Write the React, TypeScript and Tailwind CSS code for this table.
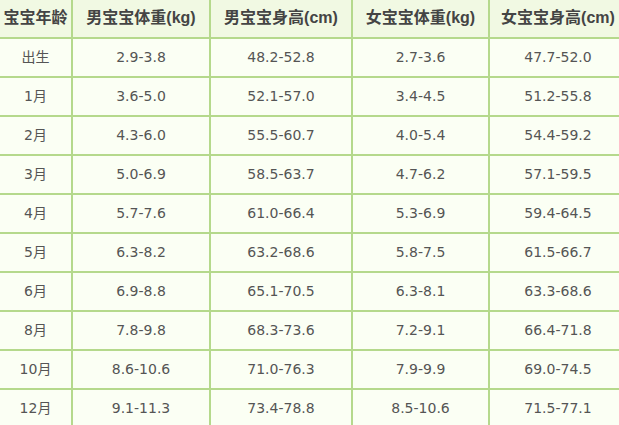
const headers = ["宝宝年龄", "男宝宝体重(kg)", "男宝宝身高(cm)", "女宝宝体重(kg)", "女宝宝身高(cm)"];

const rows: string[][] = [
  ["出生", "2.9-3.8", "48.2-52.8", "2.7-3.6", "47.7-52.0"],
  ["1月", "3.6-5.0", "52.1-57.0", "3.4-4.5", "51.2-55.8"],
  ["2月", "4.3-6.0", "55.5-60.7", "4.0-5.4", "54.4-59.2"],
  ["3月", "5.0-6.9", "58.5-63.7", "4.7-6.2", "57.1-59.5"],
  ["4月", "5.7-7.6", "61.0-66.4", "5.3-6.9", "59.4-64.5"],
  ["5月", "6.3-8.2", "63.2-68.6", "5.8-7.5", "61.5-66.7"],
  ["6月", "6.9-8.8", "65.1-70.5", "6.3-8.1", "63.3-68.6"],
  ["8月", "7.8-9.8", "68.3-73.6", "7.2-9.1", "66.4-71.8"],
  ["10月", "8.6-10.6", "71.0-76.3", "7.9-9.9", "69.0-74.5"],
  ["12月", "9.1-11.3", "73.4-78.8", "8.5-10.6", "71.5-77.1"],
];

export default function App() {
  return (
    <div className="w-[619px] h-[425px] overflow-hidden bg-[#fbfff4]">
      <div className="grid w-[628px] grid-cols-[73px_138px_142px_137px_138px]">
        {headers.map((h) => (
          <div
            key={h}
            className="flex h-[39px] items-center justify-center border-b-2 border-r-2 border-[#b5d98c] bg-[#f1f9e3] pb-[2px] font-['Liberation_Sans','Noto_Sans_CJK_SC',sans-serif] text-[16px] font-bold text-[#444]"
          >
            {h}
          </div>
        ))}
        {rows.map((row) =>
          row.map((cell, i) => (
            <div
              key={row[0] + i}
              className="flex h-[39px] items-center justify-center border-b-2 border-r-2 border-[#b5d98c] font-['DejaVu_Sans','Noto_Sans_CJK_SC',sans-serif] text-[14px] text-[#555]"
            >
              {cell}
            </div>
          ))
        )}
      </div>
    </div>
  );
}
